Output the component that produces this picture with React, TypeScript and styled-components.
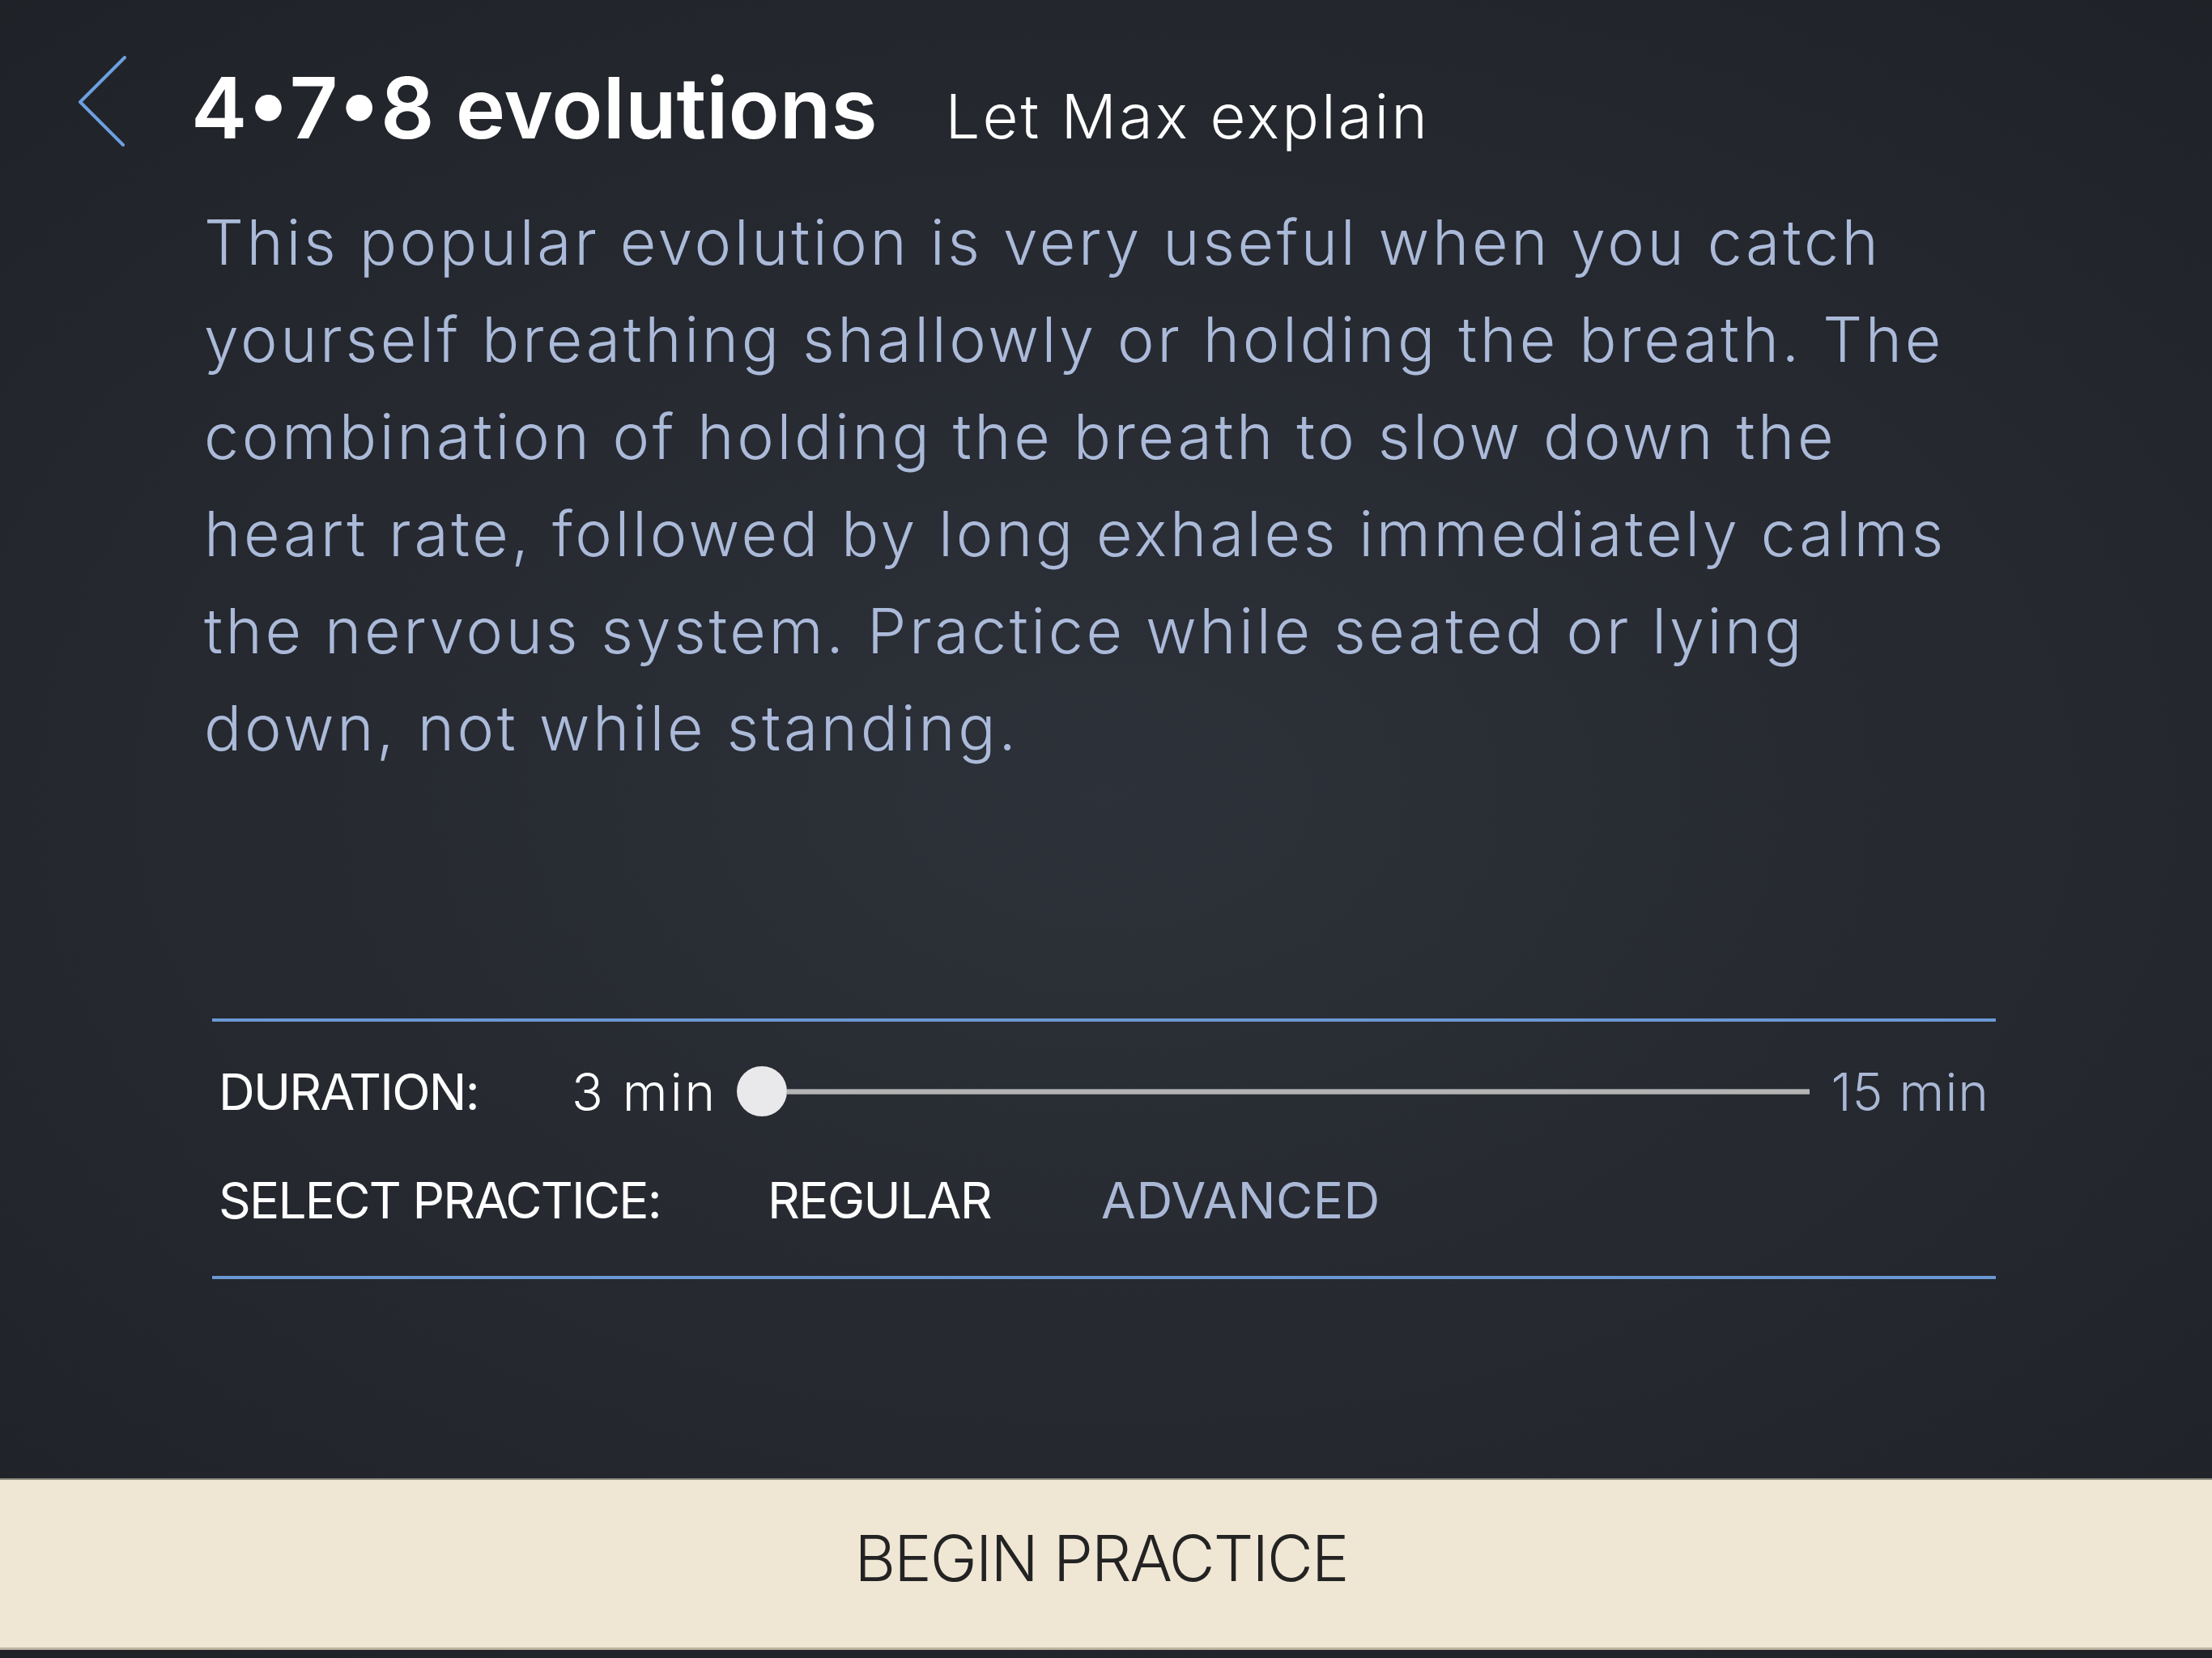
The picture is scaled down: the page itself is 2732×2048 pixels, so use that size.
import React from "react";
import styled, { createGlobalStyle } from "styled-components";

const GlobalStyle = createGlobalStyle`
  html, body {
    margin: 0;
    padding: 0;
    background: #1e2126;
  }
  * {
    box-sizing: border-box;
  }
`;

function BackChevron() {
    return (
        <svg width="60" height="112" viewBox="0 0 60 112" fill="none">
            <path d="M58 2 L3 57 L56 110" stroke="#6d9fe0" strokeWidth="4" strokeLinecap="round" strokeLinejoin="round" />
        </svg>
    );
}

function App() {
    return (
        <>
            <GlobalStyle />
            <Page>
                <Header>
                    <BackButton aria-label="Back">
                        <BackChevron />
                    </BackButton>
                    <TitleGroup>
                        <Title>4•7•8 evolutions</Title>
                        <Subtitle>Let Max explain</Subtitle>
                    </TitleGroup>
                </Header>
                <Description>
                    This popular evolution is very useful when you catch<br />
                    yourself breathing shallowly or holding the breath. The<br />
                    combination of holding the breath to slow down the<br />
                    heart rate, followed by long exhales immediately calms<br />
                    the nervous system. Practice while seated or lying<br />
                    down, not while standing.
                </Description>
                <Controls>
                    <Row>
                        <Label width={436}>DURATION:</Label>
                        <Value>3 min</Value>
                        <Slider>
                            <Thumb />
                            <Track />
                        </Slider>
                        <Value muted>15 min</Value>
                    </Row>
                    <Row>
                        <Label width={678}>SELECT PRACTICE:</Label>
                        <Option>REGULAR</Option>
                        <Option muted>ADVANCED</Option>
                    </Row>
                </Controls>
                <Spacer />
                <BeginButton>BEGIN PRACTICE</BeginButton>
            </Page>
        </>
    );
}

export default App;

const Page = styled.div`
    min-height: 100vh;
    display: flex;
    flex-direction: column;
    background: radial-gradient(ellipse 75% 65% at 50% 48%, #2d3139 0%, #272a31 45%, #1f2227 100%);
    font-family: Inter, "Open Sans", sans-serif;
`;

const Header = styled.header`
    display: flex;
    align-items: flex-start;
    margin-top: 69px;
    padding-left: 96px;
`;

const BackButton = styled.button`
    display: flex;
    align-items: center;
    width: 60px;
    height: 112px;
    padding: 0;
    margin-right: 80px;
    border: 0;
    background: none;
    cursor: pointer;
`;

const TitleGroup = styled.div`
    display: flex;
    align-items: baseline;
    gap: 84px;
    margin-top: 12px;
`;

const Title = styled.h1`
    margin: 0;
    font-size: 104px;
    font-weight: 600;
    line-height: 1;
    letter-spacing: 0;
    color: #ffffff;
`;

const Subtitle = styled.span`
    font-size: 76px;
    font-weight: 300;
    line-height: 1;
    letter-spacing: 3px;
    color: #ffffff;
`;

const Description = styled.p`
    margin: 54px 0 0 252px;
    font-size: 77px;
    font-weight: 300;
    line-height: 120px;
    letter-spacing: 3.6px;
    color: #abbad9;
    white-space: nowrap;
`;

const Controls = styled.section`
    display: flex;
    flex-direction: column;
    gap: 50px;
    margin: 299px 267px 0 262px;
    padding: 44px 8px 52px;
    border-top: 4px solid #6b98d4;
    border-bottom: 4px solid #6b98d4;
`;

const Row = styled.div`
    display: flex;
    align-items: center;
    height: 84px;
`;

const Label = styled.span<{ width: number }>`
    flex: 0 0 ${(p) => p.width}px;
    font-size: 62px;
    font-weight: 400;
    letter-spacing: -1.8px;
    color: #ffffff;
`;

const Value = styled.span<{ muted?: boolean }>`
    font-size: 64px;
    font-weight: 300;
    letter-spacing: ${(p) => (p.muted ? "1px" : "3px")};
    color: ${(p) => (p.muted ? "#aab8d6" : "#ffffff")};
`;

const Slider = styled.div`
    flex: 1;
    display: flex;
    align-items: center;
    height: 64px;
    margin: 0 26px 0 24px;
`;

const Track = styled.div`
    flex: 1;
    height: 7px;
    background: #b4b4b4;
    border-top: 1px solid #8c8c8c;
    border-bottom: 1px solid #8c8c8c;
`;

const Thumb = styled.div`
    flex: 0 0 62px;
    height: 62px;
    border-radius: 50%;
    background: #e9e9eb;
`;

const Option = styled.span<{ muted?: boolean }>`
    margin-right: 136px;
    font-size: 62px;
    font-weight: 400;
    letter-spacing: ${(p) => (p.muted ? "0.5px" : "-1.6px")};
    color: ${(p) => (p.muted ? "#aab8d6" : "#ffffff")};
`;

const Spacer = styled.div`
    flex: 1;
`;

const BeginButton = styled.button`
    height: 212px;
    margin-bottom: 10px;
    padding: 0 12px 14px 0;
    border: 0;
    border-top: 2px solid #8f8a80;
    border-bottom: 3px solid #bdb39f;
    background: #efe6d4;
    font-family: Inter, "Open Sans", sans-serif;
    font-size: 78px;
    font-weight: 300;
    letter-spacing: -1.9px;
    color: #232323;
    cursor: pointer;
`;
